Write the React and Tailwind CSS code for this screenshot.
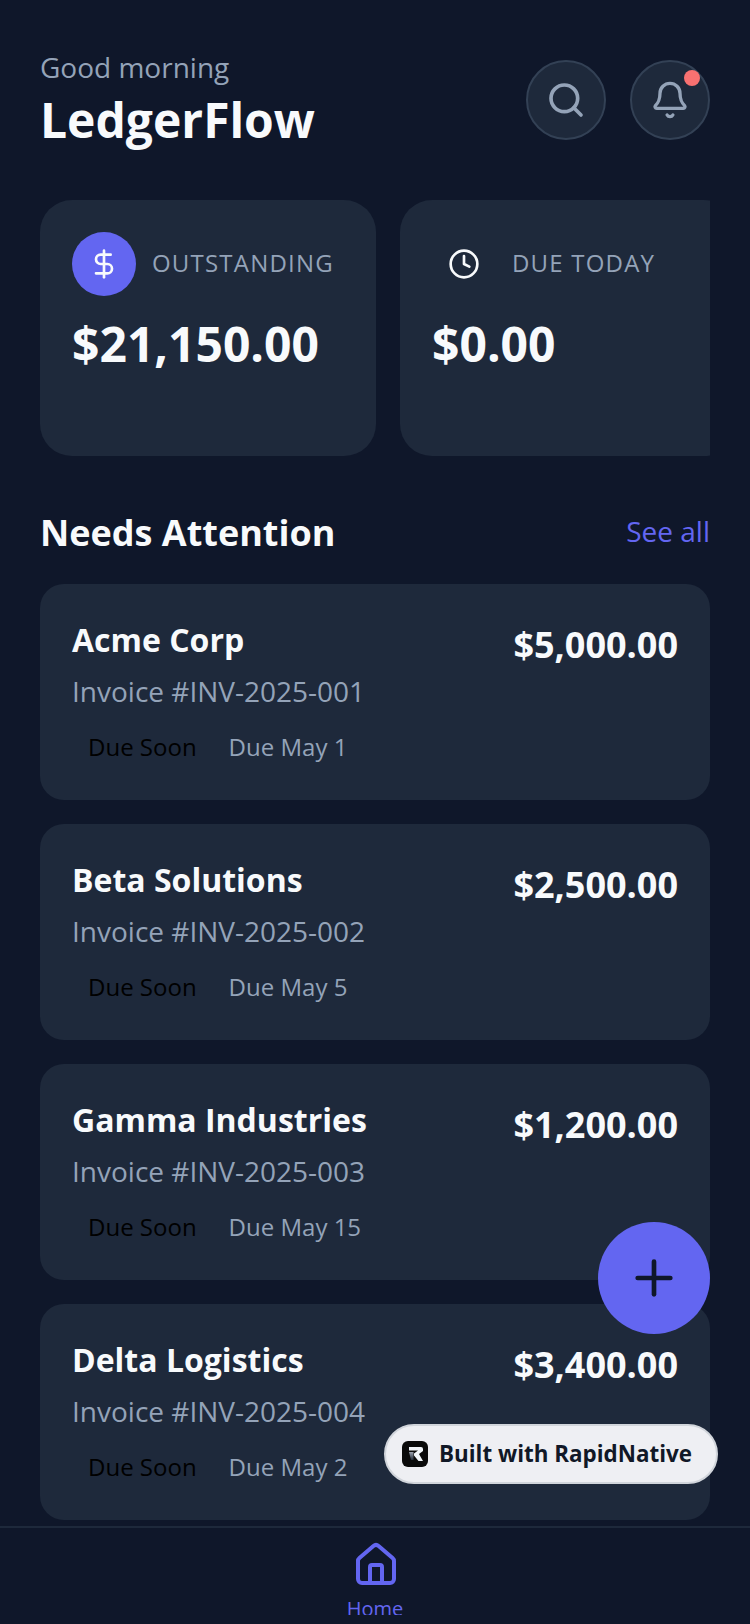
import { Search, Bell, DollarSign, Clock, Plus, Home } from 'lucide-react'

const invoices = [
  { name: 'Acme Corp', number: 'INV-2025-001', amount: '$5,000.00', due: 'Due May 1' },
  { name: 'Beta Solutions', number: 'INV-2025-002', amount: '$2,500.00', due: 'Due May 5' },
  { name: 'Gamma Industries', number: 'INV-2025-003', amount: '$1,200.00', due: 'Due May 15' },
  { name: 'Delta Logistics', number: 'INV-2025-004', amount: '$3,400.00', due: 'Due May 2' },
]

function InvoiceCard({ invoice }) {
  return (
    <div className="bg-[#1e293b] rounded-[24px] px-8 pt-[34px] h-[216px] shrink-0 flex justify-between items-start">
      <div>
        <p className="text-[32px] leading-[44px] font-bold text-[#f8fafc]">{invoice.name}</p>
        <p className="text-[28px] leading-[38px] text-[#94a3b8] mt-[10px]">Invoice #{invoice.number}</p>
        <div className="flex items-center mt-[21px]">
          <span className="px-4 text-[24px] leading-[32px] text-black">Due Soon</span>
          <span className="ml-4 text-[24px] leading-[32px] text-[#94a3b8]">{invoice.due}</span>
        </div>
      </div>
      <p className="text-[36px] leading-[52px] mt-[1px] font-bold text-[#f8fafc]">{invoice.amount}</p>
    </div>
  )
}

export default function App() {
  return (
    <div className="relative w-[750px] h-[1624px] overflow-hidden flex flex-col bg-[#0f172a] font-['Open_Sans',sans-serif]">
      <div className="flex-1 min-h-0 overflow-hidden px-10 pt-[48px]">
        {/* Header */}
        <div className="flex items-start justify-between h-[104px]">
          <div>
            <p className="text-[28px] leading-[38px] text-[#94a3b8]">Good morning</p>
            <h1 className="text-[48px] leading-[60px] font-bold text-[#f8fafc] mt-[4px]">LedgerFlow</h1>
          </div>
          <div className="flex gap-6 mt-[12px]">
            <button className="w-20 h-20 rounded-full bg-[#1e293b] border-2 border-[#334155] flex items-center justify-center">
              <Search size={40} color="#94a3b8" strokeWidth={2.2} />
            </button>
            <button className="relative w-20 h-20 rounded-full bg-[#1e293b] border-2 border-[#334155] flex items-center justify-center">
              <Bell size={40} color="#94a3b8" strokeWidth={2} />
              <span className="absolute top-[8px] right-[8px] w-4 h-4 rounded-full bg-[#f87171]" />
            </button>
          </div>
        </div>

        {/* Summary cards */}
        <div className="flex gap-6 mt-[48px] overflow-hidden">
          <div className="bg-[#1e293b] rounded-[32px] p-8 w-[336px] h-[256px] shrink-0">
            <div className="flex items-center gap-4">
              <div className="w-16 h-16 rounded-full bg-[#6366f1] flex items-center justify-center">
                <DollarSign size={32} color="#f8fafc" strokeWidth={2} />
              </div>
              <p className="text-[24px] tracking-[1.2px] text-[#94a3b8] pb-[2px]">OUTSTANDING</p>
            </div>
            <p className="text-[48px] leading-[64px] font-bold text-[#f8fafc] mt-4">$21,150.00</p>
          </div>
          <div className="bg-[#1e293b] rounded-[32px] p-8 w-[336px] h-[256px] shrink-0">
            <div className="flex items-center gap-4">
              <div className="w-16 h-16 flex items-center justify-center">
                <Clock size={32} color="#f8fafc" strokeWidth={2} />
              </div>
              <p className="text-[24px] tracking-[1.2px] text-[#94a3b8] pb-[2px]">DUE TODAY</p>
            </div>
            <p className="text-[48px] leading-[64px] font-bold text-[#f8fafc] mt-4">$0.00</p>
          </div>
        </div>

        {/* Needs attention */}
        <div className="flex items-start justify-between mt-[48px] h-[80px]">
          <h2 className="text-[36px] leading-[48px] font-bold text-[#f8fafc] mt-[5px]">Needs Attention</h2>
          <span className="text-[28px] leading-[38px] text-[#6366f1] mt-[8px]">See all</span>
        </div>
        <div className="flex flex-col gap-6">
          {invoices.map((inv) => (
            <InvoiceCard key={inv.number} invoice={inv} />
          ))}
        </div>
      </div>

      {/* Bottom nav */}
      <div className="h-[98px] shrink-0 border-t-2 border-[#1e293b] bg-[#0f172a]">
        <div className="h-[87px] flex flex-col items-center overflow-hidden pt-[13px]">
          <Home size={48} color="#6366f1" strokeWidth={2} className="shrink-0 ml-[2px]" />
          <span className="text-[20px] leading-[28px] text-[#6366f1] mt-[6px] shrink-0">Home</span>
        </div>
      </div>

      {/* FAB */}
      <button className="absolute left-[598px] top-[1222px] w-28 h-28 rounded-full bg-[#6366f1] flex items-center justify-center">
        <Plus size={56} color="#0f172a" strokeWidth={2} />
      </button>

      {/* Badge */}
      <div className="absolute left-[384px] top-[1424px] w-[334px] h-[60px] rounded-full bg-[#eeeff3] border-2 border-[#d1d5db] flex items-center pl-[16px] gap-[11px]">
        <svg width="26" height="26" viewBox="0 0 26 26">
          <defs>
            <linearGradient id="stem" x1="0" y1="0" x2="0" y2="1">
              <stop offset="0" stopColor="#9ca3af" />
              <stop offset="1" stopColor="#1f2937" />
            </linearGradient>
          </defs>
          <rect width="26" height="26" rx="6" fill="#0a0a0a" />
          <path d="M7 11h4.5v8H9z" fill="url(#stem)" />
          <path d="M7 6h12q2 0 2 2v2l-4 3 4 7h-4.5L12 14.5V12.5L16 9.5H7z" fill="#f1f5f9" />
        </svg>
        <span className="text-[22.4px] font-bold text-[#111827]">Built with RapidNative</span>
      </div>
    </div>
  )
}
